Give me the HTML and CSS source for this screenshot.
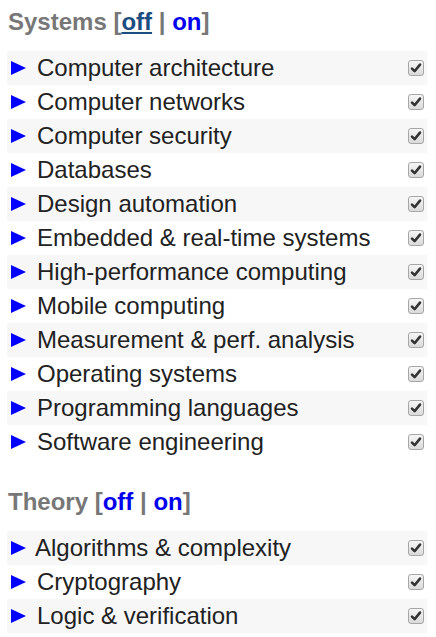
FILE: index.html
```html
<!DOCTYPE html>
<html>
<head>
<meta charset="utf-8">
<link rel="stylesheet" href="styles.css">
</head>
<body>
<section class="group">
  <h2 class="group-title">Systems <span class="br">[</span><a class="toggle visited" href="#">off</a> <span class="sep">|</span> <a class="toggle" href="#">on</a><span class="br">]</span></h2>
  <ul class="list">
    <li class="row"><span class="tri"></span><span class="label">Computer architecture</span><span class="cb"><svg viewBox="0 0 16 16" width="16" height="16"><path d="M4 8.6 L6.6 11.2 L12 4.6" fill="none" stroke="#333" stroke-width="2.6" stroke-linecap="round" stroke-linejoin="round"/></svg></span></li>
    <li class="row"><span class="tri"></span><span class="label">Computer networks</span><span class="cb"><svg viewBox="0 0 16 16" width="16" height="16"><path d="M4 8.6 L6.6 11.2 L12 4.6" fill="none" stroke="#333" stroke-width="2.6" stroke-linecap="round" stroke-linejoin="round"/></svg></span></li>
    <li class="row"><span class="tri"></span><span class="label">Computer security</span><span class="cb"><svg viewBox="0 0 16 16" width="16" height="16"><path d="M4 8.6 L6.6 11.2 L12 4.6" fill="none" stroke="#333" stroke-width="2.6" stroke-linecap="round" stroke-linejoin="round"/></svg></span></li>
    <li class="row"><span class="tri"></span><span class="label">Databases</span><span class="cb"><svg viewBox="0 0 16 16" width="16" height="16"><path d="M4 8.6 L6.6 11.2 L12 4.6" fill="none" stroke="#333" stroke-width="2.6" stroke-linecap="round" stroke-linejoin="round"/></svg></span></li>
    <li class="row"><span class="tri"></span><span class="label">Design automation</span><span class="cb"><svg viewBox="0 0 16 16" width="16" height="16"><path d="M4 8.6 L6.6 11.2 L12 4.6" fill="none" stroke="#333" stroke-width="2.6" stroke-linecap="round" stroke-linejoin="round"/></svg></span></li>
    <li class="row"><span class="tri"></span><span class="label">Embedded &amp; real-time systems</span><span class="cb"><svg viewBox="0 0 16 16" width="16" height="16"><path d="M4 8.6 L6.6 11.2 L12 4.6" fill="none" stroke="#333" stroke-width="2.6" stroke-linecap="round" stroke-linejoin="round"/></svg></span></li>
    <li class="row"><span class="tri"></span><span class="label">High-performance computing</span><span class="cb"><svg viewBox="0 0 16 16" width="16" height="16"><path d="M4 8.6 L6.6 11.2 L12 4.6" fill="none" stroke="#333" stroke-width="2.6" stroke-linecap="round" stroke-linejoin="round"/></svg></span></li>
    <li class="row"><span class="tri"></span><span class="label">Mobile computing</span><span class="cb"><svg viewBox="0 0 16 16" width="16" height="16"><path d="M4 8.6 L6.6 11.2 L12 4.6" fill="none" stroke="#333" stroke-width="2.6" stroke-linecap="round" stroke-linejoin="round"/></svg></span></li>
    <li class="row"><span class="tri"></span><span class="label">Measurement &amp; perf. analysis</span><span class="cb"><svg viewBox="0 0 16 16" width="16" height="16"><path d="M4 8.6 L6.6 11.2 L12 4.6" fill="none" stroke="#333" stroke-width="2.6" stroke-linecap="round" stroke-linejoin="round"/></svg></span></li>
    <li class="row"><span class="tri"></span><span class="label">Operating systems</span><span class="cb"><svg viewBox="0 0 16 16" width="16" height="16"><path d="M4 8.6 L6.6 11.2 L12 4.6" fill="none" stroke="#333" stroke-width="2.6" stroke-linecap="round" stroke-linejoin="round"/></svg></span></li>
    <li class="row"><span class="tri"></span><span class="label">Programming languages</span><span class="cb"><svg viewBox="0 0 16 16" width="16" height="16"><path d="M4 8.6 L6.6 11.2 L12 4.6" fill="none" stroke="#333" stroke-width="2.6" stroke-linecap="round" stroke-linejoin="round"/></svg></span></li>
    <li class="row"><span class="tri"></span><span class="label">Software engineering</span><span class="cb"><svg viewBox="0 0 16 16" width="16" height="16"><path d="M4 8.6 L6.6 11.2 L12 4.6" fill="none" stroke="#333" stroke-width="2.6" stroke-linecap="round" stroke-linejoin="round"/></svg></span></li>
  </ul>
</section>
<section class="group">
  <h2 class="group-title">Theory <span class="br">[</span><a class="toggle" href="#">off</a> <span class="sep">|</span> <a class="toggle" href="#">on</a><span class="br">]</span></h2>
  <ul class="list">
    <li class="row"><span class="tri tri-tight"></span><span class="label">Algorithms &amp; complexity</span><span class="cb"><svg viewBox="0 0 16 16" width="16" height="16"><path d="M4 8.6 L6.6 11.2 L12 4.6" fill="none" stroke="#333" stroke-width="2.6" stroke-linecap="round" stroke-linejoin="round"/></svg></span></li>
    <li class="row"><span class="tri"></span><span class="label">Cryptography</span><span class="cb"><svg viewBox="0 0 16 16" width="16" height="16"><path d="M4 8.6 L6.6 11.2 L12 4.6" fill="none" stroke="#333" stroke-width="2.6" stroke-linecap="round" stroke-linejoin="round"/></svg></span></li>
    <li class="row"><span class="tri"></span><span class="label">Logic &amp; verification</span><span class="cb"><svg viewBox="0 0 16 16" width="16" height="16"><path d="M4 8.6 L6.6 11.2 L12 4.6" fill="none" stroke="#333" stroke-width="2.6" stroke-linecap="round" stroke-linejoin="round"/></svg></span></li>
  </ul>
</section>
</body>
</html>
```
FILE: styles.css
```css
html, body {
  margin: 0;
  padding: 0;
  background: #fff;
}
body {
  font-family: "Liberation Sans", Arial, sans-serif;
  color: #222;
  padding: 9px 9px 0 7px;
}
.group + .group {
  margin-top: 30px;
}
.group-title {
  margin: 0 0 16px 1px;
  font-size: 24px;
  line-height: 26px;
  font-weight: bold;
  color: #777;
}
.toggle {
  color: #0000ee;
  text-decoration: none;
}
.toggle.visited {
  color: #1a4d80;
  text-decoration: underline;
}
.list {
  list-style: none;
  margin: 0;
  padding: 0;
}
.row {
  display: flex;
  align-items: center;
  height: 34px;
  padding: 0 3px 0 4px;
  font-size: 24px;
}
.row:nth-child(odd) {
  background: #f7f7f7;
}
.tri {
  width: 0;
  height: 0;
  border-top: 7.5px solid transparent;
  border-bottom: 7.5px solid transparent;
  border-left: 15px solid #0000ff;
  margin-right: 11px;
  flex: none;
}
.tri-tight {
  margin-right: 9px;
}
.label {
  flex: 1;
  white-space: nowrap;
}
.cb {
  flex: none;
  width: 16px;
  height: 16px;
  box-sizing: border-box;
  border: 1px solid #a6a6a6;
  border-radius: 3px;
  background: linear-gradient(#f6f6f6, #dadada);
  position: relative;
}
.cb svg {
  position: absolute;
  left: -1px;
  top: -1px;
}
```
